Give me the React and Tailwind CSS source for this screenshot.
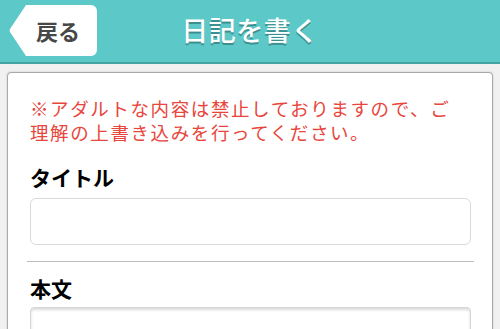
import React from "react";

const jp = "font-['Noto_Sans_CJK_JP','Noto_Sans',sans-serif]";

export default function App() {
  return (
    <div className={`w-[500px] h-[329px] overflow-hidden bg-[#f1f1f1] ${jp}`}>
      <header className="h-[64px] bg-[#5cc8c8] border-b-2 border-[#46a3a3] grid grid-cols-[1fr_auto_1fr] items-center">
        <div className="flex items-center pl-[9px] pb-[2px]">
          <svg width="17" height="51" viewBox="0 0 17 51" className="block">
            <path d="M17 0 L1 24 Q0 25.5 1 27 L17 51 Z" fill="#ffffff" />
          </svg>
          <div className="w-[71px] h-[51px] bg-white rounded-r-[6px] flex items-center pl-[10px]">
            <span className="text-[22px] font-bold text-[#474747] leading-none">戻る</span>
          </div>
        </div>
        <h1 className="text-[27px] font-medium text-white leading-none tracking-[0.5px] [text-shadow:0_2px_0_#3d8f8f] pb-[3px]">
          日記を書く
        </h1>
        <div />
      </header>
      <main className="px-[7px] pt-[8px]">
        <div className="bg-white border border-[#a9a9a9] rounded-[4px] shadow-[0_0_2px_rgba(0,0,0,0.2)] pl-[22px] pr-[21px] pt-[23px] pb-[40px]">
          <p className="text-[18.5px] leading-[24px] tracking-[1.6px] text-[#e8453c] whitespace-nowrap">
            ※アダルトな内容は禁止しておりますので、ご
            <br />
            理解の上書き込みを行ってください。
          </p>
          <h2 className="mt-[19px] text-[21px] leading-[28px] font-bold text-black">タイトル</h2>
          <div className="mt-[7px] h-[47px] rounded-[6px] border border-[#dadada] bg-white" />
          <div className="mt-[16px] -mx-[3px] h-px bg-[#bdbdbd]" />
          <h2 className="mt-[12px] text-[21px] leading-[28px] font-bold text-black">本文</h2>
          <div className="mt-[5px] h-[120px] rounded-[4px] border border-[#d6d6d6] bg-white shadow-[inset_0_2px_3px_rgba(0,0,0,0.15)]" />
        </div>
      </main>
    </div>
  );
}
